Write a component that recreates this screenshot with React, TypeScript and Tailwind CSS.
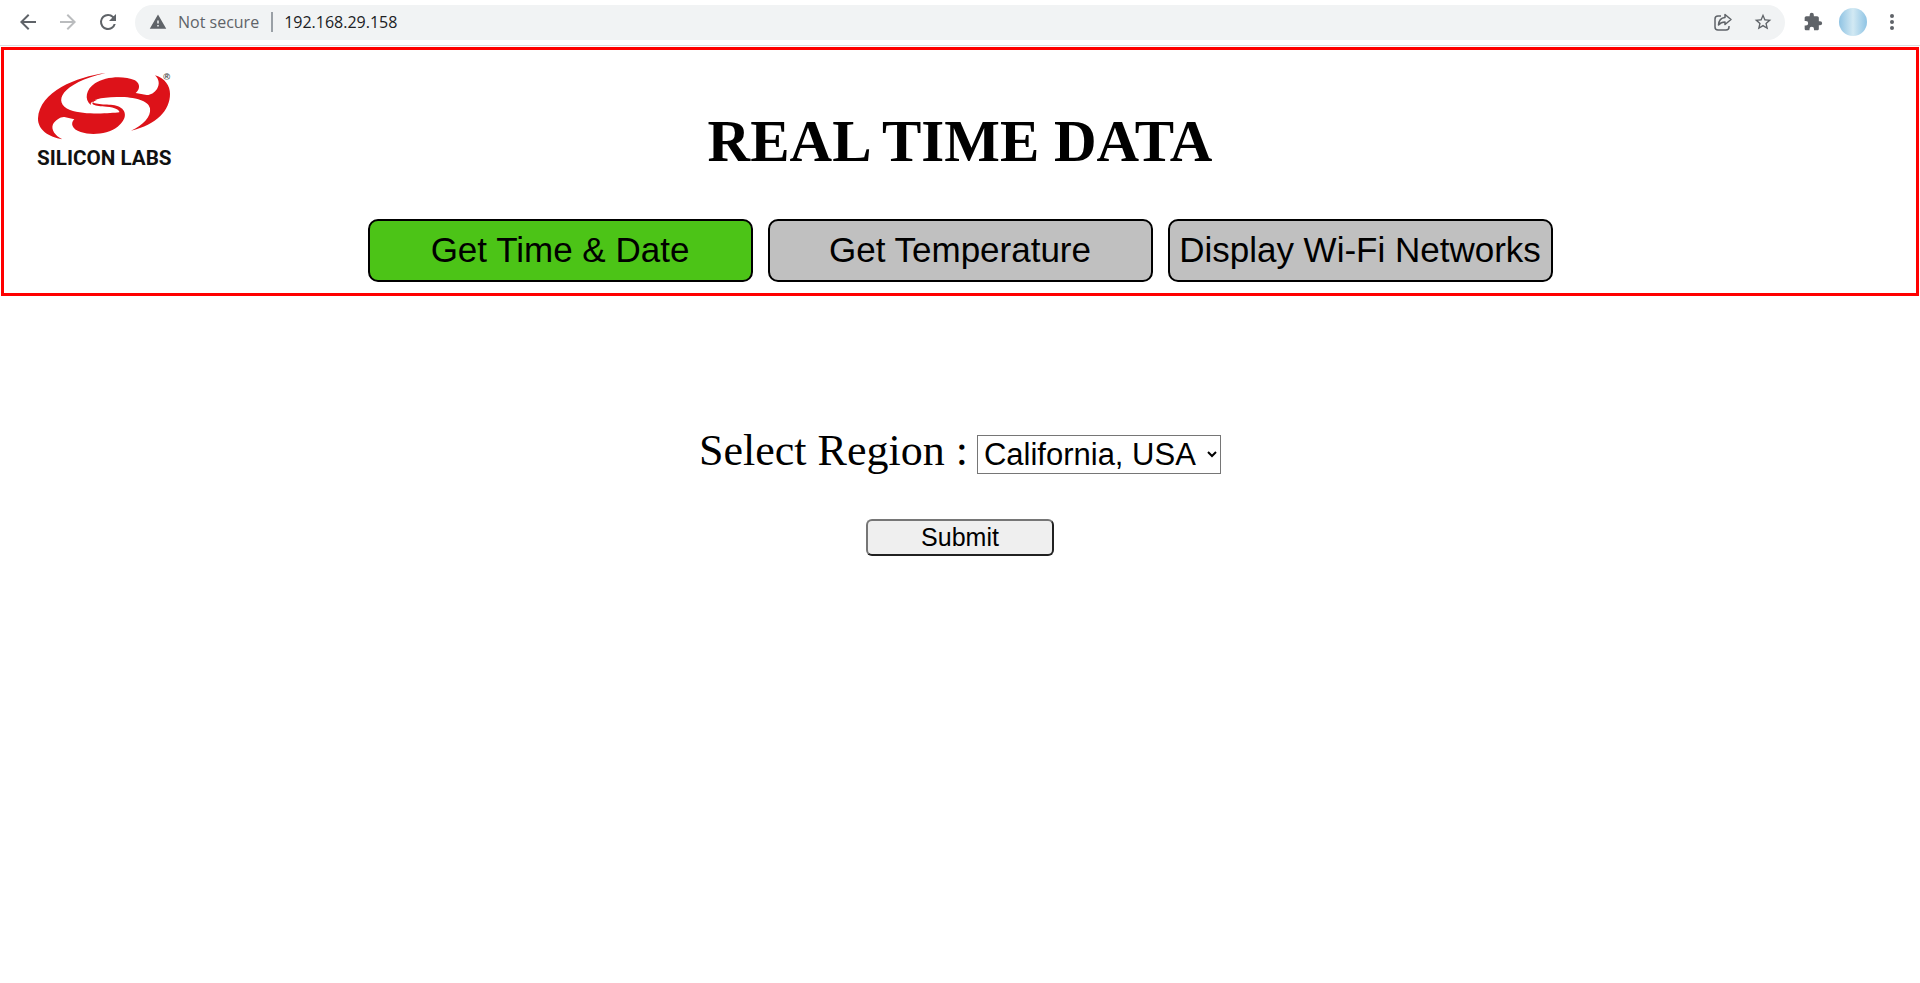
import React from "react";

const TABS = [
  { label: "Get Time & Date", active: true },
  { label: "Get Temperature", active: false },
  { label: "Display Wi-Fi Networks", active: false },
];

function Logo() {
  return (
    <svg viewBox="0 0 510 360" className="h-[120px] w-[170px]" role="img" aria-label="Silicon Labs">
      <g fill="#dd1219">
        <path d="M257 39C170 50 58 95 54 175C53 210 88 232 127 238C105 228 92 208 99 193C106 180 122 170 133 171L163 178C150 190 156 208 182 216C216 227 264 222 293 200C322 178 322 150 294 139C270 130 225 138 216 124C214 120 222 120 232 119C200 132 225 138 260 140C285 142 300 150 298 157C270 160 195 166 150 150C96 128 122 70 257 39Z" />
        <path d="M333 212C410 195 450 150 450 102C450 78 435 55 405 46C417 58 420 72 411 87C403 99 390 106 380 105L347 99C360 88 362 72 345 61C310 46 255 50 225 70C198 88 192 118 212 135C210 120 240 112 290 111C340 110 385 120 390 145C394 170 370 196 333 212Z" />
      </g>
      <text x="51" y="315" fontSize="62" fontWeight="700" fontFamily="Roboto, sans-serif" fill="#111">SILICON LABS</text>
      <text x="430" y="59" fontSize="28" fontWeight="700" fontFamily="Liberation Sans, sans-serif" fill="#444">®</text>
    </svg>
  );
}

function Toolbar() {
  return (
    <header className="flex h-[46px] items-center border-b border-[#dadce0] pb-px pl-4 pr-[18px] font-['Open_Sans',sans-serif] text-base text-[#5f6368]">
      <button aria-label="Back" className="mr-4 size-6">
        <svg viewBox="0 0 24 24" className="size-6" fill="#5f6368"><path d="M20 11H7.8l5.6-5.6L12 4l-8 8 8 8 1.4-1.4L7.8 13H20v-2z" /></svg>
      </button>
      <button aria-label="Forward" className="mr-4 size-6">
        <svg viewBox="0 0 24 24" className="size-6" fill="#babcbe"><path d="M12 4l-1.4 1.4 5.6 5.6H4v2h12.200l-5.600 5.600L12 20l8-8z" /></svg>
      </button>
      <button aria-label="Reload" className="mr-[15px] size-6">
        <svg viewBox="0 0 24 24" className="size-6" fill="#5f6368"><path d="M17.650 6.350A7.950 7.950 0 0 0 12 4a8 8 0 1 0 7.730 10h-2.080A6 6 0 1 1 12 6c1.660 0 3.140.690 4.220 1.780L13 11h7V4z" /></svg>
      </button>
      <div className="flex h-[35px] flex-1 items-center rounded-full bg-[#f1f3f4] pl-[14px] pr-3">
        <svg viewBox="0 0 24 24" className="mr-[11px] size-[18px]" fill="#5f6368"><path d="M1 21h22L12 2 1 21zm12-3h-2v-2h2v2zm0-4h-2v-4h2v4z" /></svg>
        <span>Not secure</span>
        <span className="ml-3 mr-[11px] h-5 w-0.5 bg-[#9aa0a6]" />
        <span className="flex-1 text-[#202124]">192.168.29.158</span>
        <button aria-label="Share" className="mr-5">
          <svg viewBox="0 0 20 20" className="size-5" fill="none" stroke="#5f6368" strokeWidth="1.500"><path d="M8 4H5Q2 4 2 7v8q0 3 3 3h8q3 0 3-3v-1" /><path d="M12 2.500l6 5-6 5V10q-4 0-6.500 3Q6 6 12 5.500z" strokeLinejoin="round" /></svg>
        </button>
        <button aria-label="Bookmark">
          <svg viewBox="0 0 24 24" className="size-5" fill="#5f6368"><path d="M22 9.240l-7.190-.620L12 2 9.190 8.630 2 9.240l5.460 4.730L5.820 21 12 17.270 18.180 21l-1.630-7.030L22 9.240zM12 15.400l-3.760 2.270 1-4.280-3.320-2.880 4.380-.380L12 6.100l1.710 4.040 4.380.380-3.320 2.880 1 4.280L12 15.400z" /></svg>
        </button>
      </div>
      <button aria-label="Extensions" className="ml-[18px]">
        <svg viewBox="0 0 24 24" className="size-5" fill="#5f6368"><path d="M20.500 11H19V7c0-1.100-.900-2-2-2h-4V3.500a2.500 2.500 0 0 0-5 0V5H4c-1.100 0-2 .900-2 2v3.800h1.500a2.700 2.700 0 0 1 0 5.400H2V20c0 1.100.900 2 2 2h3.800v-1.500a2.700 2.700 0 0 1 5.400 0V22H17c1.100 0 2-.900 2-2v-4h1.500a2.500 2.500 0 0 0 0-5z" /></svg>
      </button>
      <button aria-label="Profile" className="ml-4 size-7 rounded-full bg-linear-to-r from-[#8fc3e3] via-[#d2e9f3] to-[#8fc4e4]" />
      <button aria-label="Menu" className="ml-[15px]">
        <svg viewBox="0 0 20 20" className="size-5" fill="#5f6368"><circle cx="10" cy="4" r="2" /><circle cx="10" cy="10" r="2" /><circle cx="10" cy="16" r="2" /></svg>
      </button>
    </header>
  );
}

export default function App() {
  return (
    <div className="min-h-screen bg-white text-black">
      <Toolbar />
      <section className="mx-px mt-px border-3 border-[#ff0000] pb-[11px]">
        <div className="grid grid-cols-[1fr_auto_1fr] items-start px-4">
          <div className="pt-[10px]">
            <Logo />
          </div>
          <h1 className="pt-[57px] font-['Liberation_Serif',serif] text-[59px]/[68px] font-bold">REAL TIME DATA</h1>
        </div>
        <nav className="mt-[39px] flex justify-center gap-[15px]">
          {TABS.map((t) => (
            <button
              key={t.label}
              className={`h-[63px] w-[385px] rounded-[10px] border-2 border-black font-['Liberation_Sans',sans-serif] text-[35px] whitespace-nowrap ${t.active ? "bg-[#4cc417]" : "bg-[#c0c0c0]"}`}
            >
              {t.label}
            </button>
          ))}
        </nav>
      </section>
      <form className="mt-[130px] flex flex-col items-center" onSubmit={(e) => e.preventDefault()}>
        <div className="flex items-baseline gap-[9px]">
          <label htmlFor="region" className="font-['Liberation_Serif',serif] text-[44px]/[50px]">Select Region :</label>
          <select id="region" className="w-[244px] border border-[#767676] bg-white pl-0.5 pr-[3px] font-['Liberation_Sans',sans-serif] text-[31px]/[37px]">
            <option>California, USA</option>
          </select>
        </div>
        <button className="mt-[43px] h-[37px] w-[188px] rounded-[6px] border-2 border-t-[#767676] border-r-[#212121] border-b-[#212121] border-l-[#767676] bg-[#efefef] font-['Liberation_Sans',sans-serif] text-[25px]/[29px]">
          Submit
        </button>
      </form>
    </div>
  );
}
